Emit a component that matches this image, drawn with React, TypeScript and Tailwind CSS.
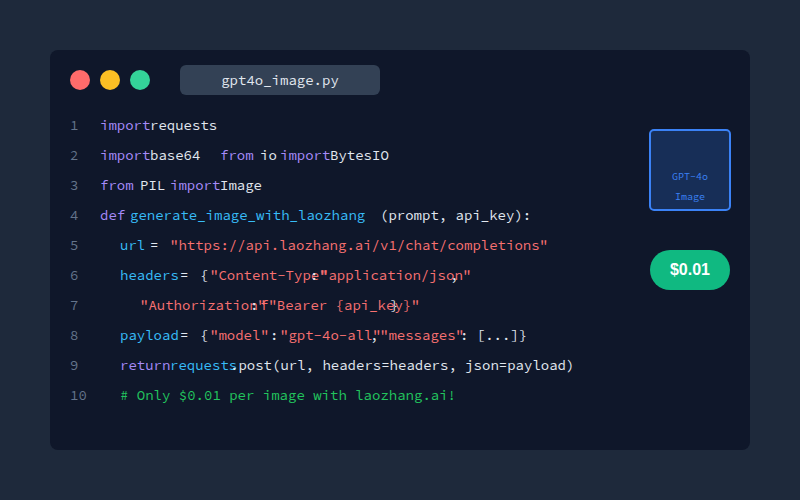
import React from 'react';

type Token = { text: string; cls: string };

const kw = 'text-[#a78bfa]';
const fn = 'text-[#38bdf8]';
const str = 'text-[#f87171]';
const plain = 'text-[#e2e8f0]';

const lines: Token[][] = [
  [
    { text: 'import', cls: `w-[50px] ${kw}` },
    { text: 'requests', cls: `w-[70px] ${plain}` },
  ],
  [
    { text: 'import', cls: `w-[50px] ${kw}` },
    { text: 'base64', cls: `w-[70px] ${plain}` },
    { text: 'from', cls: `w-[40px] ${kw}` },
    { text: 'io', cls: `w-[20px] ${plain}` },
    { text: 'import', cls: `w-[50px] ${kw}` },
    { text: 'BytesIO', cls: `w-[70px] ${plain}` },
  ],
  [
    { text: 'from', cls: `w-[40px] ${kw}` },
    { text: 'PIL', cls: `w-[30px] ${plain}` },
    { text: 'import', cls: `w-[50px] ${kw}` },
    { text: 'Image', cls: `w-[50px] ${plain}` },
  ],
  [
    { text: 'def', cls: `w-[30px] ${kw}` },
    { text: 'generate_image_with_laozhang', cls: `w-[250px] ${fn}` },
    { text: '(prompt, api_key):', cls: `w-[170px] ${plain}` },
  ],
  [
    { text: 'url', cls: `ml-5 w-[30px] ${fn}` },
    { text: '=', cls: `w-5 ${plain}` },
    { text: '"https://api.laozhang.ai/v1/chat/completions"', cls: `w-[380px] ${str}` },
  ],
  [
    { text: 'headers', cls: `ml-5 w-[60px] ${fn}` },
    { text: '=', cls: `w-5 ${plain}` },
    { text: '{', cls: `w-2.5 ${plain}` },
    { text: '"Content-Type"', cls: `w-[100px] ${str}` },
    { text: ':', cls: `w-2.5 ${plain}` },
    { text: '"application/json"', cls: `w-[130px] ${str}` },
    { text: ',', cls: `w-5 ${plain}` },
  ],
  [
    { text: '"Authorization"', cls: `ml-10 w-[110px] ${str}` },
    { text: ':', cls: `w-2.5 ${plain}` },
    { text: 'f"Bearer {api_key}"', cls: `w-[130px] ${str}` },
    { text: '}', cls: `w-2.5 ${plain}` },
  ],
  [
    { text: 'payload', cls: `ml-5 w-[60px] ${fn}` },
    { text: '=', cls: `w-5 ${plain}` },
    { text: '{', cls: `w-2.5 ${plain}` },
    { text: '"model"', cls: `w-[60px] ${str}` },
    { text: ':', cls: `w-2.5 ${plain}` },
    { text: '"gpt-4o-all"', cls: `w-[90px] ${str}` },
    { text: ',', cls: `w-2.5 ${plain}` },
    { text: '"messages"', cls: `w-[80px] ${str}` },
    { text: ': [...]}', cls: `w-[70px] ${plain}` },
  ],
  [
    { text: 'return', cls: `ml-5 w-[50px] ${kw}` },
    { text: 'requests', cls: `w-[60px] ${fn}` },
    { text: '.post(url, headers=headers, json=payload)', cls: `w-[350px] ${plain}` },
  ],
  [{ text: '# Only $0.01 per image with laozhang.ai!', cls: 'ml-5 w-[340px] text-[#22c55e]' }],
];

const App: React.FC = () => {
  return (
    <div className="w-[800px] h-[500px] bg-[#1e293b] flex items-center justify-center font-['Source_Code_Pro','DejaVu_Sans_Mono',monospace] [font-variant-ligatures:none]">
      <div className="w-[700px] h-[400px] bg-[#0f172a] rounded-lg px-5 pt-[15px]">
        {/* Title bar */}
        <div className="flex items-center h-[30px]">
          <div className="w-5 h-5 rounded-full bg-[#ff6b6b]"></div>
          <div className="w-5 h-5 rounded-full bg-[#fbbf24] ml-2.5"></div>
          <div className="w-5 h-5 rounded-full bg-[#34d399] ml-2.5"></div>
          <div className="ml-[30px] w-[200px] h-[30px] rounded-md bg-[#334155] flex items-center justify-center text-sm text-[#e2e8f0]">
            gpt4o_image.py
          </div>
        </div>

        <div className="flex mt-[15px]">
          {/* Code */}
          <div className="flex-1">
            {lines.map((tokens, i) => (
              <div key={i} className="flex items-center h-[30px] text-sm whitespace-pre">
                <div className="w-[30px] shrink-0 text-[#64748b]">{i + 1}</div>
                {tokens.map((t, j) => (
                  <span key={j} className={`shrink-0 ${t.cls}`}>
                    {t.text}
                  </span>
                ))}
              </div>
            ))}
          </div>

          {/* Side widgets */}
          <div className="w-20 shrink-0 pt-[19px]">
            <div className="-ml-px w-[82px] h-[82px] rounded-[5px] border-2 border-[#3b82f6] bg-[#172e57] flex flex-col items-center justify-end pb-[2px] text-[10px] leading-5 text-[#3b82f6]">
              <div>GPT-4o</div>
              <div>Image</div>
            </div>
            <div className="w-20 h-10 mt-[39px] rounded-full bg-[#10b981] flex items-center justify-center text-base font-bold text-white font-['Liberation_Sans',sans-serif]">
              $0.01
            </div>
          </div>
        </div>
      </div>
    </div>
  );
};

export default App;
